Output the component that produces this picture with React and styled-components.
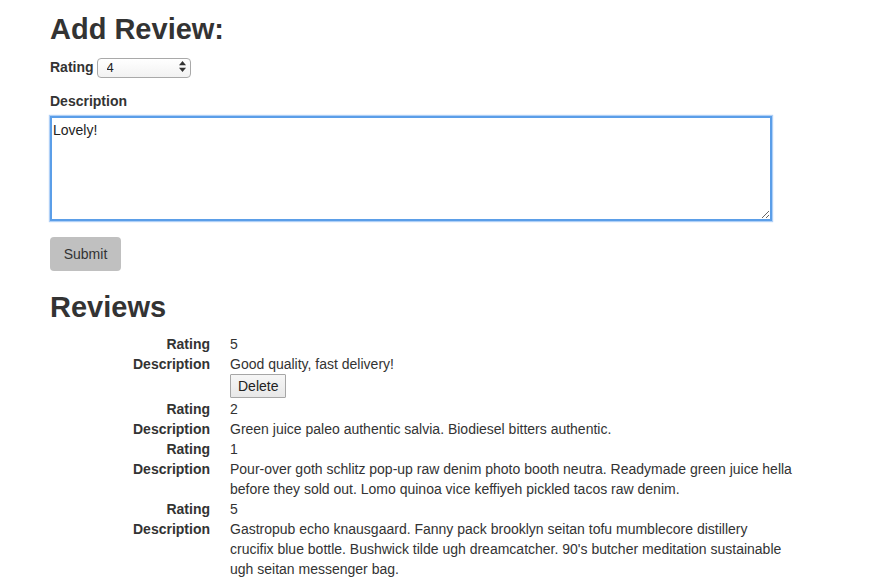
import React, { useState } from 'react';
import styled, { createGlobalStyle } from 'styled-components';

const initialReviews = [
  { id: 1, rating: 5, description: 'Good quality, fast delivery!', mine: true },
  { id: 2, rating: 2, description: 'Green juice paleo authentic salvia. Biodiesel bitters authentic.' },
  { id: 3, rating: 1, description: 'Pour-over goth schlitz pop-up raw denim photo booth neutra. Readymade green juice hella before they sold out. Lomo quinoa vice keffiyeh pickled tacos raw denim.' },
  { id: 4, rating: 5, description: "Gastropub echo knausgaard. Fanny pack brooklyn seitan tofu mumblecore distillery crucifix blue bottle. Bushwick tilde ugh dreamcatcher. 90's butcher meditation sustainable ugh seitan messenger bag." },
];

const App = () => {
  const [rating, setRating] = useState('4');
  const [description, setDescription] = useState('Lovely!');
  const [reviews, setReviews] = useState(initialReviews);

  const handleDelete = (id) => {
    setReviews(reviews.filter(r => r.id !== id));
  };

  return (
    <>
      <GlobalStyle />
      <Container>
        <Heading>Add Review:</Heading>
        <RatingRow>
          <Label>Rating</Label>
          <SelectWrap>
            <Select value={rating} onChange={e => setRating(e.target.value)}>
              {[1, 2, 3, 4, 5].map(n => <option key={n} value={n}>{n}</option>)}
            </Select>
            <Arrows width="7" height="11" viewBox="0 0 7 11">
              <path d="M3.5 0 L7 4.2 L0 4.2 Z" fill="#333" />
              <path d="M3.5 11 L7 6.8 L0 6.8 Z" fill="#333" />
            </Arrows>
          </SelectWrap>
        </RatingRow>
        <FieldLabel>Description</FieldLabel>
        <TextArea value={description} onChange={e => setDescription(e.target.value)} />
        <SubmitButton>Submit</SubmitButton>
        <Heading $top={20}>Reviews</Heading>
        <ReviewList>
          {reviews.map(review => (
            <React.Fragment key={review.id}>
              <Term>Rating</Term>
              <Detail>{review.rating}</Detail>
              <Term>Description</Term>
              <Detail>
                {review.description}
                {review.mine && <DeleteButton onClick={() => handleDelete(review.id)}>Delete</DeleteButton>}
              </Detail>
            </React.Fragment>
          ))}
        </ReviewList>
      </Container>
    </>
  );
};

export default App;

const GlobalStyle = createGlobalStyle`
  body {
    margin: 0;
    background: #fff;
    font-family: "Liberation Sans", Arial, sans-serif;
    font-size: 14px;
    line-height: 20px;
    color: #333;
  }
  * { box-sizing: border-box; }
`;

const Container = styled.div`
  padding: 0 50px;
`;

const Heading = styled.h1`
  margin: ${p => p.$top || 13}px 0 10px;
  font-size: 29px;
  line-height: 33px;
  font-weight: bold;
  color: #333;
`;

const RatingRow = styled.div`
  display: flex;
  align-items: center;
  gap: 3px;
  height: 22px;
  margin-top: 10px;
  margin-bottom: 13px;
`;

const Label = styled.label`
  font-weight: bold;
`;

const FieldLabel = styled.label`
  display: block;
  font-weight: bold;
  margin-bottom: 5px;
`;

const SelectWrap = styled.div`
  position: relative;
  width: 94px;
  height: 20px;
`;

const Select = styled.select`
  appearance: none;
  width: 100%;
  height: 100%;
  padding: 0 0 0 9px;
  border: 1px solid #a9a9a9;
  border-radius: 4px;
  background: linear-gradient(#ffffff, #f2f2f2);
  font-family: inherit;
  font-size: 13px;
  color: #222;
  outline: none;
`;

const Arrows = styled.svg`
  position: absolute;
  right: 5px;
  top: 4px;
  pointer-events: none;
`;

const TextArea = styled.textarea`
  display: block;
  width: 722px;
  height: 105px;
  padding: 4px 1px;
  border: 2px solid #5b9ee8;
  box-shadow: 0 0 1px 1px rgba(110, 170, 240, 0.55);
  font-family: inherit;
  font-size: 14px;
  line-height: 17px;
  color: #222;
  outline: none;
  margin-bottom: 16px;
`;

const SubmitButton = styled.button`
  display: block;
  width: 71px;
  height: 34px;
  border: none;
  border-radius: 4px;
  background: #c0c0c0;
  font-family: inherit;
  font-size: 14px;
  color: #333;
  cursor: pointer;
`;

const ReviewList = styled.dl`
  display: grid;
  grid-template-columns: 160px 563px;
  column-gap: 20px;
  margin: 0;
`;

const Term = styled.dt`
  text-align: right;
  font-weight: bold;
`;

const Detail = styled.dd`
  margin: 0;
`;

const DeleteButton = styled.button`
  display: block;
  height: 24px;
  margin-bottom: 1px;
  padding: 0 7px;
  border: 1px solid #a6a6a6;
  border-radius: 1px;
  background: linear-gradient(#f6f6f6, #e8e8e8);
  font-family: inherit;
  font-size: 14px;
  color: #222;
  cursor: pointer;
`;
